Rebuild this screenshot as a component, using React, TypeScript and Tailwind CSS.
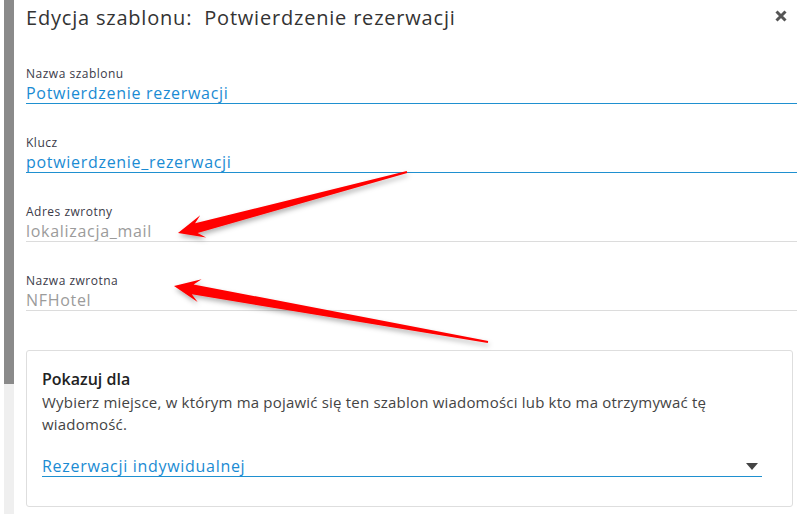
import React from "react";

type Field = { label: string; value: string; active: boolean };

const fields: Field[] = [
  { label: "Nazwa szablonu", value: "Potwierdzenie rezerwacji", active: true },
  { label: "Klucz", value: "potwierdzenie_rezerwacji", active: true },
  { label: "Adres zwrotny", value: "lokalizacja_mail", active: false },
  { label: "Nazwa zwrotna", value: "NFHotel", active: false },
];

function arrowPoints(tail: [number, number], tip: [number, number]) {
  const dx = tip[0] - tail[0];
  const dy = tip[1] - tail[1];
  const len = Math.hypot(dx, dy);
  const ux = dx / len;
  const uy = dy / len;
  const nx = -uy;
  const ny = ux;
  const at = (d: number, w: number) =>
    `${(tip[0] - ux * d + nx * w).toFixed(1)},${(tip[1] - uy * d + ny * w).toFixed(1)}`;
  return [
    `${tail[0] + nx},${tail[1] + ny}`,
    at(19, 5),
    at(26, 11.5),
    `${tip[0]},${tip[1]}`,
    at(26, -11.5),
    at(19, -5),
    `${tail[0] - nx},${tail[1] - ny}`,
  ].join(" ");
}

export default function App() {
  return (
    <div className="relative flex h-[514px] w-[801px] overflow-hidden bg-white font-['Open_Sans',sans-serif]">
      {/* scrollbar */}
      <div className="flex w-[14px] shrink-0 flex-col pl-[4px]">
        <div className="h-[384px] bg-[#8a8a8a]" />
        <div className="flex-1 bg-[#efefef]" />
      </div>

      <div className="flex-1 pl-[12px] pr-[4px]">
        <div className="flex items-start justify-between pt-[4px]">
          <h1 className="text-[20px] leading-[28px] tracking-[0.8px] text-[#333]">
            Edycja szablonu:&nbsp; Potwierdzenie rezerwacji
          </h1>
          <button className="mr-[10px] mt-[6px]">
            <svg width="12" height="12" viewBox="0 0 12 12">
              <path d="M1.5 1.5L10.5 10.5M10.5 1.5L1.5 10.5" stroke="#555" strokeWidth="3" />
            </svg>
          </button>
        </div>

        <div className="mt-[34px]">
          {fields.map((f, i) => (
            <div key={f.label} className={i === 0 ? "" : "mt-[31px]"}>
              <div className="h-[15px] text-[12px] leading-[15px] tracking-[0.5px] text-[#3a3a48]">{f.label}</div>
              <div
                className={
                  "mt-[3px] h-[20px] border-b text-[16px] leading-[19px] tracking-[0.7px] " +
                  (f.active ? "border-[#1f90d0] text-[#1a8bd3]" : "border-[#dcdcdc] text-[#9b9b9b]")
                }
              >
                {f.value}
              </div>
            </div>
          ))}
        </div>

        <div className="mt-[39px] mr-[4px] h-[157px] rounded-[3px] border border-[#dedede] pl-[15px] pr-[30px] pt-[18px]">
          <div className="text-[16px] font-semibold leading-[20px] text-[#222]">Pokazuj dla</div>
          <p className="mt-[2px] text-[15px] leading-[22px] tracking-[0.2px] text-[#444]">
            Wybierz miejsce, w którym ma pojawić się ten szablon wiadomości lub kto ma otrzymywać tę wiadomość.
          </p>
          <div className="mt-[21px] flex h-[21px] items-center justify-between border-b border-[#1f90d0]">
            <span className="text-[16px] leading-[20px] tracking-[0.7px] text-[#1a8bd3]">Rezerwacji indywidualnej</span>
            <svg width="12" height="7" viewBox="0 0 12 7" className="mr-[4px]">
              <path d="M0 0H12L6 7Z" fill="#444" />
            </svg>
          </div>
        </div>
      </div>

      {/* annotation arrows */}
      <svg className="pointer-events-none absolute left-0 top-0" width="801" height="514">
        <defs>
          <filter id="sh" x="-10%" y="-50%" width="120%" height="200%">
            <feDropShadow dx="1" dy="3" stdDeviation="2.5" floodColor="#000" floodOpacity="0.3" />
          </filter>
        </defs>
        <polygon points={arrowPoints([407, 172], [178, 233])} fill="#ff0000" filter="url(#sh)" />
        <polygon points={arrowPoints([488, 342], [174, 286])} fill="#ff0000" filter="url(#sh)" />
      </svg>
    </div>
  );
}
